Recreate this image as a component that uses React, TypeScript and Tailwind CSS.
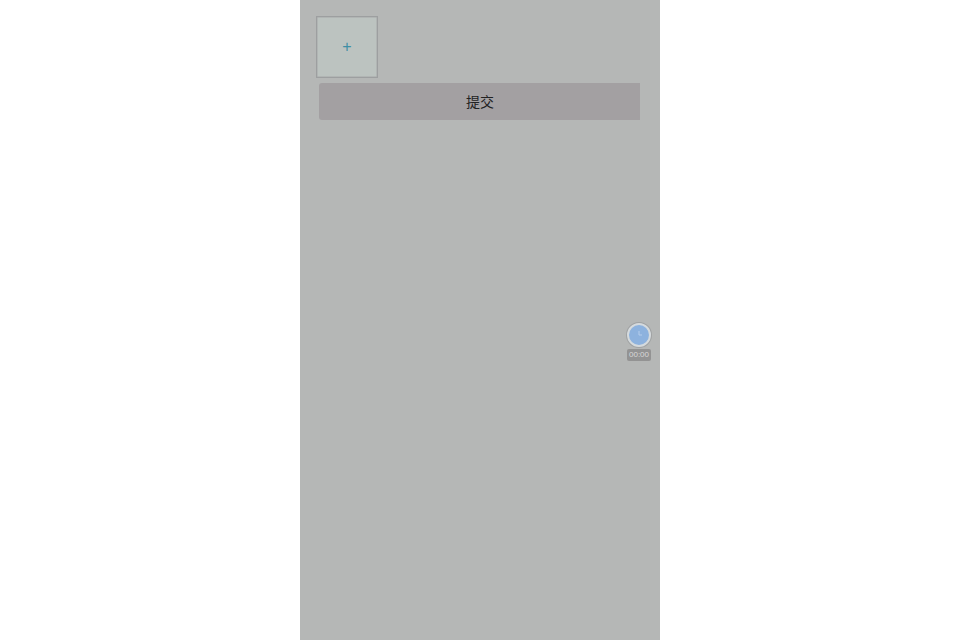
import React from "react";

export default function App() {
  return (
    <div className="flex h-[640px] justify-center bg-white font-['Liberation_Sans','Noto_Sans_CJK_SC',sans-serif]">
      <div className="relative w-[360px] bg-[#b5b7b6]">
        <div className="pl-4 pt-4">
          <div className="flex h-[62px] w-[62px] items-center justify-center border border-[#9d9fa0] bg-[#bcc3c0] text-base leading-none text-[#3f8fa5] shadow-[inset_0_0_0_0.5px_#a6a8a8]">
            +
          </div>
        </div>
        <div className="ml-[19px] mt-[5px] flex h-[37px] w-[321px] items-center justify-center rounded-l-[3px] bg-[#a3a0a2] pl-px text-sm text-[#222222]">
          提交
        </div>

        {/* floating timer */}
        <div className="absolute left-[327px] top-[323px] flex w-6 flex-col items-center">
          <div className="flex h-6 w-6 items-center justify-center rounded-full border-2 border-[#d5dadd] bg-[#8db2de] shadow-[0_0_0_1px_#a0a2a3]">
            <svg width="14" height="14" viewBox="0 0 14 14" fill="none">
              <path d="M7 3v4h3" stroke="#b4cdec" strokeWidth="1" />
            </svg>
          </div>
          <div className="mt-[2px] flex h-[12px] w-6 items-center justify-center rounded-[2px] bg-[#939393] text-[8px] font-normal leading-none text-[#d8d8d8]">
            00:00
          </div>
        </div>
      </div>
    </div>
  );
}
